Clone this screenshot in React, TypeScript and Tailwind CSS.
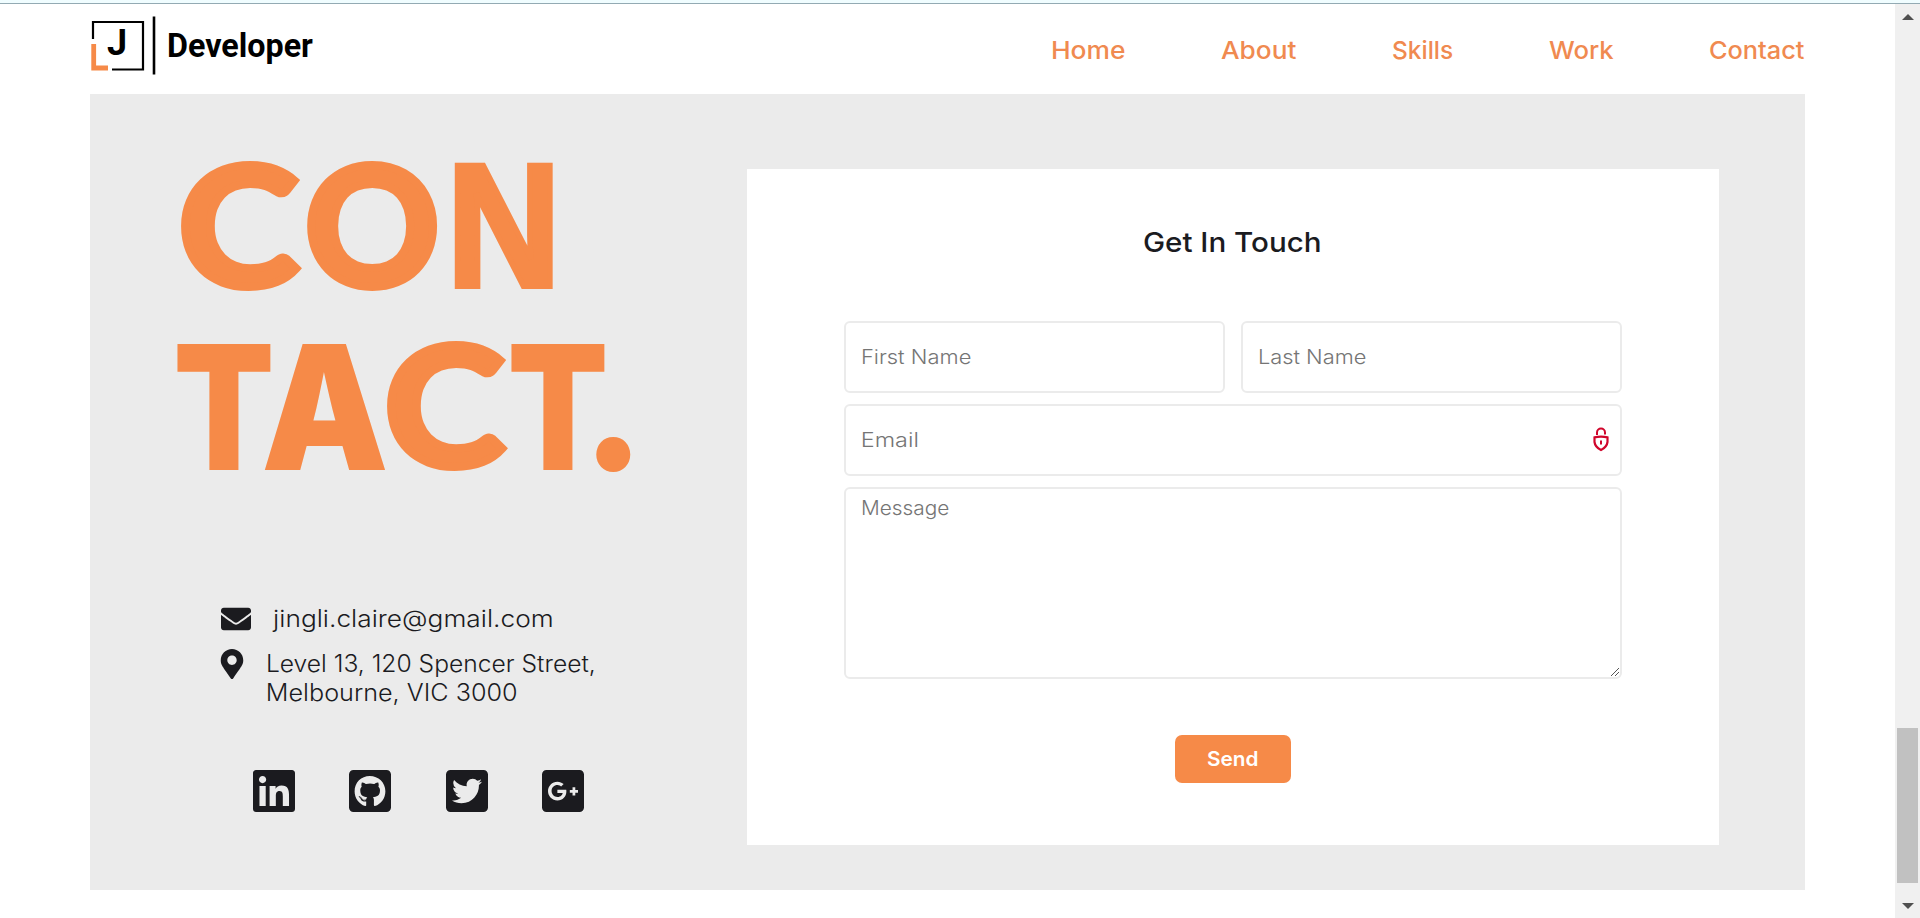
import { useLayoutEffect, useRef, useState } from "react";
import {
  FaEnvelope,
  FaGithubSquare,
  FaGooglePlusSquare,
  FaLinkedin,
  FaMapMarkerAlt,
  FaTwitterSquare,
} from "react-icons/fa";

/** Text stretched horizontally so that its visible glyphs fill the box given by className. */
function Fit({ text, className }: { text: string; className: string }) {
  const ref = useRef<HTMLSpanElement>(null);
  const [transform, setTransform] = useState("none");
  useLayoutEffect(() => {
    const el = ref.current;
    const ctx = document.createElement("canvas").getContext("2d");
    if (!el || !ctx) return;
    const cs = getComputedStyle(el);
    ctx.font = `${cs.fontWeight} ${cs.fontSize} ${cs.fontFamily}`;
    const m = ctx.measureText(text);
    const scale = el.clientWidth / (m.actualBoundingBoxRight + m.actualBoundingBoxLeft);
    setTransform(`translateX(${m.actualBoundingBoxLeft * scale}px) scaleX(${scale})`);
  }, [text]);
  return (
    <span ref={ref} className={`block shrink-0 whitespace-nowrap ${className}`}>
      <span className="inline-block origin-left" style={{ transform }}>
        {text}
      </span>
    </span>
  );
}

function Logo() {
  return (
    <div className="flex h-[60px] items-start">
      <div className="relative h-[60px] w-[66px]">
        <svg className="block" width="66" height="60" viewBox="0 0 66 60" fill="none">
          <path d="M3 24V7H53V54.5H22" stroke="#000" strokeWidth="2.2" />
          <path d="M3.7 29V53H18" stroke="#f68a48" strokeWidth="4.8" />
          <path d="M64 1.5V59.5" stroke="#000" strokeWidth="2.6" />
        </svg>
        <Fit
          text="J"
          className="absolute left-[17px] top-[7px] w-[18px] font-['Roboto',sans-serif] text-[36px] leading-[42px] font-bold text-black"
        />
      </div>
      <Fit
        text="Developer"
        className="mt-[12px] ml-[13px] w-[144px] font-['Roboto',sans-serif] text-[32.5px] leading-[38px] font-bold text-black"
      />
    </div>
  );
}

const nav = [
  { label: "Home", w: "w-[73px]" },
  { label: "About", w: "w-[75px] ml-[96px]" },
  { label: "Skills", w: "w-[60px] ml-[97px]" },
  { label: "Work", w: "w-[65px] ml-[96px]" },
  { label: "Contact", w: "w-[94px] ml-[96px]" },
];

const socials = [FaLinkedin, FaGithubSquare, FaTwitterSquare, FaGooglePlusSquare];

const field = "relative rounded-[6px] border-2 border-[#ebebeb] bg-white";
const hint = "text-[19.5px] leading-6 font-[350] text-[#757575]";
const round =
  "mt-[-5px] font-['Lato',sans-serif] text-[165px] font-bold [-webkit-text-stroke:8px_#f68a48]";
const straight =
  "mt-[-1px] font-['Liberation_Sans',sans-serif] text-[174px] font-bold [-webkit-text-stroke:6px_#f68a48]";

function LockIcon() {
  return (
    <svg width="16" height="25" viewBox="0 0 16 25" fill="none" stroke="#d0062c">
      <path d="M4 8V5.6a4 4 0 0 1 8 0V7.6" strokeWidth="2" />
      <path d="M1.5 10.4q6.5-1.6 13 0v4.6q-.6 5-6.5 8q-5.9-3-6.5-8z" strokeWidth="2.2" />
      <path d="M8 13.6v3.8" strokeWidth="2" />
    </svg>
  );
}

export default function App() {
  return (
    <div className="flex h-[918px] w-[1920px] flex-col overflow-hidden bg-white font-['Inter',sans-serif] text-[#1b1b1f]">
      <div className="h-1 shrink-0 border-b border-[#93aab3] bg-[#f0fdff]" />
      <div className="flex min-h-0 flex-1">
        <div className="flex w-[1895px] flex-col pr-[90px] pl-[90px]">
          <header className="flex h-[90px] items-start justify-between pt-[11px]">
            <Logo />
            <nav className="mt-[20px] flex pr-px text-[24.5px] leading-[30px] font-medium text-[#f08a50]">
              {nav.map((n) => (
                <a key={n.label} href="#">
                  <Fit text={n.label} className={n.w} />
                </a>
              ))}
            </nav>
          </header>
          <main className="flex h-[796px] bg-[#ebebeb]">
            <section className="w-[657px] pt-[43px]">
              <h1 className="text-[173.5px] leading-[180px] font-black text-[#f68a48]">
                <span className="flex h-[180px]">
                  <Fit text="C" className={`${round} ml-[95px] w-[112px]`} />
                  <Fit text="O" className={`${round} ml-[14px] w-[123px]`} />
                  <Fit text="N" className={`${straight} ml-[23px] w-[93px]`} />
                </span>
                <span className="flex h-[180px]">
                  <Fit text="T" className="ml-[87px] w-[94px]" />
                  <Fit text="A" className="ml-[-7px] w-[122px]" />
                  <Fit text="C" className={`${round} ml-[5px] w-[112px]`} />
                  <Fit text="T" className="ml-[8px] w-[94px]" />
                  <Fit
                    text="."
                    className="mt-[-22px] ml-[-9px] w-[35px] font-['Lato',sans-serif] text-[220px] font-black"
                  />
                </span>
              </h1>
              <div className="mt-[107px] ml-[131px] text-[23.5px] leading-[29px] font-light">
                <div className="flex h-[30px]">
                  <FaEnvelope size={30} />
                  <Fit text="jingli.claire@gmail.com" className="ml-[21px] w-[280px]" />
                </div>
                <div className="mt-[15px] flex">
                  <FaMapMarkerAlt size={30} className="ml-[-4px]" />
                  <div className="ml-[21px]">
                    <Fit text="Level 13, 120 Spencer Street," className="w-[326px]" />
                    <Fit text="Melbourne, VIC 3000" className="w-[248px]" />
                  </div>
                </div>
              </div>
              <div className="mt-[60px] ml-[160px] flex gap-[48.3px]">
                {socials.map((Icon, i) => (
                  <Icon key={i} size={48} />
                ))}
              </div>
            </section>
            <form className="mt-[75px] flex h-[676px] w-[972px] flex-col items-center bg-white pt-[55px]">
              <Fit text="Get In Touch" className="mr-[2px] w-[176px] text-[27.5px] leading-[36px] font-medium" />
              <div className="mt-[61px] flex w-[778px] flex-col gap-[11px]">
                <div className="flex gap-4">
                  <div className={`${field} h-[72px] w-[381px] px-[16px] py-[22px]`}>
                    <Fit text="First Name" className={`${hint} w-[109px]`} />
                  </div>
                  <div className={`${field} h-[72px] w-[381px] px-[16px] py-[22px]`}>
                    <Fit text="Last Name" className={`${hint} w-[107px]`} />
                  </div>
                </div>
                <div className={`${field} flex h-[72px] items-center justify-between pr-[11px] pb-[2px] pl-[16px]`}>
                  <Fit text="Email" className={`${hint} mt-[2px] w-[55px]`} />
                  <LockIcon />
                </div>
                <div className={`${field} h-[192px] px-[16px] pt-[7px]`}>
                  <Fit text="Message" className={`${hint} w-[87px]`} />
                  <svg className="absolute right-0 bottom-0" width="10" height="10" viewBox="0 0 10 10" stroke="#555">
                    <path d="M1 9L9 1M5 9L9 5" strokeWidth="1" />
                  </svg>
                </div>
              </div>
              <button
                type="button"
                className="mt-[56px] flex h-12 w-[116px] items-center justify-center rounded-[7px] bg-[#f68a48] text-[20px] leading-6 font-semibold text-white"
              >
                <Fit text="Send" className="mr-[2px] w-[51px] text-left" />
              </button>
            </form>
          </main>
        </div>
        <aside className="flex w-[25px] flex-col items-center bg-[#f0f0f0]">
          <svg className="mt-[10px] shrink-0" width="12" height="6" viewBox="0 0 12 6" fill="#505050">
            <path d="M0 6L6 0L12 6z" />
          </svg>
          <div className="mt-[708px] h-[155px] w-[21px] shrink-0 bg-[#c1c1c1]" />
          <svg className="mt-[20px] shrink-0" width="12" height="6" viewBox="0 0 12 6" fill="#505050">
            <path d="M0 0L6 6L12 0z" />
          </svg>
        </aside>
      </div>
    </div>
  );
}
